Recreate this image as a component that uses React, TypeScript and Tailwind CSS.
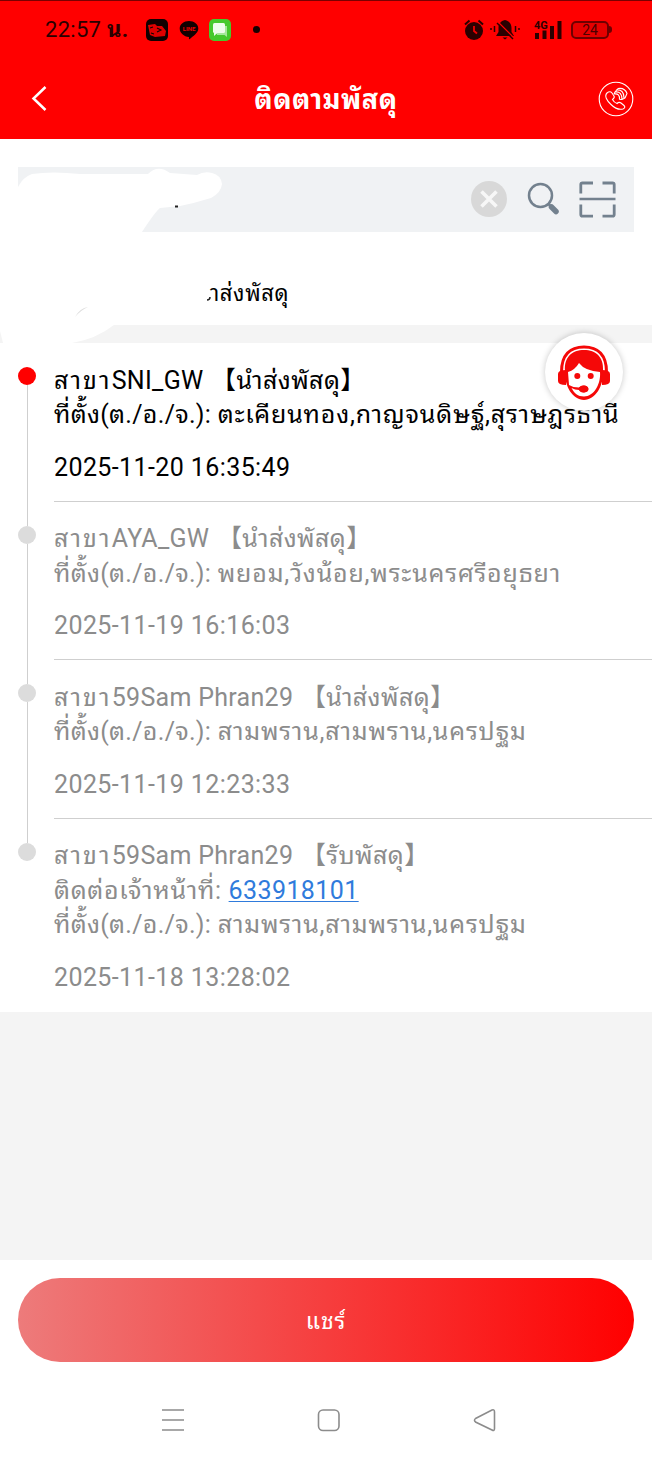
import type { ReactNode } from "react";

type TrackEvent = {
  branch: string;
  status: string;
  phone?: string;
  place: string;
  time: string;
};

const events: TrackEvent[] = [
  {
    branch: "SNI_GW",
    status: "【นำส่งพัสดุ】",
    place: "ตะเคียนทอง,กาญจนดิษฐ์,สุราษฎร์ธานี",
    time: "2025-11-20 16:35:49",
  },
  {
    branch: "AYA_GW",
    status: "【นำส่งพัสดุ】",
    place: "พยอม,วังน้อย,พระนครศรีอยุธยา",
    time: "2025-11-19 16:16:03",
  },
  {
    branch: "59Sam Phran29",
    status: "【นำส่งพัสดุ】",
    place: "สามพราน,สามพราน,นครปฐม",
    time: "2025-11-19 12:23:33",
  },
  {
    branch: "59Sam Phran29",
    status: "【รับพัสดุ】",
    phone: "633918101",
    place: "สามพราน,สามพราน,นครปฐม",
    time: "2025-11-18 13:28:02",
  },
];

function StatusBar() {
  return (
    <div className="flex h-[58px] items-center border-t border-[#7a0000] pr-[40px] pl-[45px] text-[#2b0000]">
      <span className="w-[101px] text-[22px] leading-none tracking-[0.3px] whitespace-nowrap">
        22:57 <span className="font-bold">น.</span>
      </span>

      {/* Notifications */}
      <svg width="22" height="22" viewBox="0 0 22 22">
        <rect width="22" height="22" rx="5" fill="#120000" />
        <path d="M2 6 L9 5 L11 7 L16 7 L20 12 L19 17 L9 18 L4 16 Z" fill="#e00000" />
        <path d="M4 9 L7 8 M5 14 L8 15 M11 9 L15 11 L11 13" fill="none" stroke="#120000" strokeWidth="1.1" />
      </svg>
      <svg className="ml-[11px]" width="20" height="20" viewBox="0 0 20 20">
        <path d="M10 1 C15.2 1 19.3 4.3 19.3 8.5 C19.3 13 13.8 16.2 10.8 19 C10 19.7 9.8 18.9 10 17 C4.9 16.7 .7 13 .7 8.5 C.7 4.3 4.8 1 10 1Z" fill="#120000" />
        <text x="10" y="11" textAnchor="middle" fontSize="6" fontWeight="700" fill="#f00000">LINE</text>
      </svg>
      <svg className="ml-[10px]" width="22" height="22" viewBox="0 0 22 22">
        <rect width="22" height="22" rx="5" fill="#45c92d" />
        <path d="M8 7 H18 V18 L15.500 16 H8 Z" fill="#a5e89b" />
        <rect x="4" y="4" width="12" height="10" rx="1.500" fill="#eefcec" />
        <path d="M5 13 V17 L9 13.500Z" fill="#eefcec" />
      </svg>
      <span className="ml-[22px] size-[7px] rounded-full bg-[#150000]" />

      {/* System icons */}
      <svg className="ml-auto" width="20" height="22" viewBox="0 0 20 22">
        <circle cx="10" cy="12" r="9" fill="#2b0000" />
        <path d="M1 5.500 L5.500 1.500 M19 5.500 L14.500 1.500" stroke="#2b0000" strokeWidth="2" />
        <path d="M10 7 V12 L13 14.500" fill="none" stroke="#f00000" strokeWidth="1.800" />
      </svg>
      <svg className="ml-[6px]" width="30" height="22" viewBox="0 0 30 22">
        <path d="M15 1 C19.500 2 21.500 5 21.500 9 V13 L24 17 H6 L8.500 13 V9 C8.500 5 10.500 2 15 1Z M12.500 18.500 H17.500 L15 20.500Z" fill="#2b0000" />
        <path d="M8 3 L24 19" stroke="#ff0000" strokeWidth="1.500" />
        <path d="M7 4 L23 20" stroke="#2b0000" strokeWidth="1.500" />
        <path d="M1 9 V11 M4.500 7 V13 M25.500 7 V13 M29 9 V11" stroke="#2b0000" strokeWidth="1.500" />
      </svg>
      <svg className="ml-[13px]" width="30" height="22" viewBox="0 0 30 22">
        <path d="M4 14 V20 M11.500 11.500 V20 M19 7 V20 M26.500 2 V20" stroke="#2b0000" strokeWidth="4" />
        <text x="1" y="9.500" fontSize="11" fontWeight="700" fill="#2b0000">4G</text>
      </svg>
      <span className="ml-[8px] flex items-center">
        <span className="flex h-[18px] w-[38px] items-center justify-center rounded-[5px] border-2 border-[#6e0000] bg-[#e60000] text-[14px] leading-none text-[#4b0000]">
          24
        </span>
        <span className="h-[7px] w-[3px] rounded-r-sm bg-[#6e0000]" />
      </span>
    </div>
  );
}

function Header() {
  return (
    <div className="grid h-[81px] grid-cols-[1fr_auto_1fr] items-center pr-[18px] pl-[31px] text-white">
      <svg width="36" height="28" viewBox="0 0 36 28" fill="none" stroke="currentColor" strokeWidth="2.500">
        <path d="M14.500 2 L2.500 13.500 L14.500 25" />
      </svg>
      <h1 className="-ml-[13px] pt-[4px] text-[27px] font-bold tracking-[0.6px] whitespace-nowrap">ติดตามพัสดุ</h1>
      <svg className="ml-auto" width="36" height="36" viewBox="0 0 36 36" fill="none" stroke="currentColor" strokeWidth="1.100">
        <circle cx="18" cy="18" r="16.800" />
        <path d="M9 12 Q12 9.500 14 12 L16 15 Q17 16.500 14.500 18.500 Q16 21.500 19 22.500 Q21 20.500 23 22 L26 24.500 Q28 26.500 25 28 Q19 29.500 13 23.500 C9 20 6 15 9 12Z" />
        <path d="M16 13 Q22 12 21.500 18.500 M17 11 Q24 10 24 18.500 M18 9 Q26 8 26 17 M20 7.500 Q27 6.500 29 12.500 L27 17 M16 13 L17 11 L20 7.500 M21.500 18.500 L24 18.500 L27 17" />
      </svg>
    </div>
  );
}

function SearchBox() {
  return (
    <div className="mx-[18px] mt-[28px] flex h-[65px] items-center justify-end bg-[#f0f2f4] pr-[18px] pb-px">
      <svg width="36" height="36" viewBox="0 0 36 36">
        <circle cx="18" cy="18" r="18" fill="#d8d8d8" />
        <path d="M10.500 10.500 L25.500 25.500 M25.500 10.500 L10.500 25.500" stroke="#f7f7f7" strokeWidth="3.500" />
      </svg>
      <svg className="ml-[20px]" width="33" height="34" viewBox="0 0 33 34" fill="none" stroke="#73818e">
        <circle cx="13.500" cy="13.500" r="11.500" strokeWidth="2.500" />
        <path d="M21.500 22 L24 24.500" strokeWidth="2.500" />
        <path d="M24.500 25 L29 29.500" strokeWidth="5.500" strokeLinecap="round" />
      </svg>
      <svg className="ml-[19px]" width="37" height="37" viewBox="0 0 37 37" fill="none" stroke="#73818e" strokeWidth="2.800">
        <path d="M1.800 12.500 V3.500 Q1.800 2 3.500 2 H14 M23.500 2 H33.500 Q35.200 2 35.200 3.500 V12.500 M35.200 23.500 V33.500 Q35.200 35.200 33.500 35.200 H23.500 M14 35.200 H3.500 Q1.800 35.200 1.800 33.500 V23.500" />
        <path d="M.5 18 H36.500" strokeWidth="2.500" />
      </svg>
    </div>
  );
}

/* Brush strokes hiding the parcel number and the courier line */
function Redaction() {
  return (
    <svg className="absolute top-[139px] left-0" width="326" height="210" viewBox="0 139 326 210">
      <path
        d="M0 196 L18 187 Q23 177 32 174 Q52 171 80 174 H148 Q158 164 170 173 L197 175 Q204 171 212 173 Q221 175 222 184 Q221 193 211 198 Q195 203 180 206 L160 208 Q155 212 142 232 V300 L114 325 Q96 339 72 343 L3 343 L0 331 Z"
        fill="#fff"
      />
      <rect x="175" y="205.500" width="3" height="2" fill="#222" />
      <path d="M75 317 Q80 308 88 307 Q81 310 75 317Z" fill="#dedede" />
      <path d="M207 300 Q210 300 210 297" fill="none" stroke="#222" strokeWidth="1.500" />
    </svg>
  );
}

function SupportButton() {
  return (
    <button className="absolute top-[333px] left-[545px] flex size-[78px] items-center justify-center rounded-full bg-white shadow-[0_0_6px_rgba(0,0,0,0.22)]">
      <svg width="54" height="56" viewBox="0 0 54 56">
        <path d="M4.500 28 C4.500 11 13 3 27 3 C41 3 49.500 11 49.500 28" fill="none" stroke="#f50808" strokeWidth="3" />
        <path d="M8 27 C7 13 15 6 27 6 C39 6 47 13 46 27 C47 42 38 56 27 56 C16 56 7 42 8 27Z" fill="#f50808" />
        <path d="M11 28 Q18 26 22 19 Q28 27 43 28 C44 40 37 52.500 27 52.500 C21 52.500 17 49 14.500 44 Q18 46 22 46 Q24 48.500 27 48.500 Q31.500 48 31.500 45 Q31 41.500 27 41.500 Q24 41.500 22 43.500 Q16 43.500 12 41Z" fill="#fff" />
        <ellipse cx="26.500" cy="45" rx="4.800" ry="3.400" fill="#f50808" />
        <circle cx="20.300" cy="32" r="3" fill="#f50808" />
        <circle cx="33.700" cy="32" r="3" fill="#f50808" />
        <path d="M9 26 Q1 26 1 30 V37 Q1 41 9 41Z M45 26 Q53 26 53 30 V37 Q53 41 45 41Z" fill="#f50808" />
      </svg>
    </button>
  );
}

function Line({ children }: { children: ReactNode }) {
  return <p className="h-[34.500px] leading-[34.500px] whitespace-nowrap">{children}</p>;
}

function TimelineItem({ event, first, last }: { event: TrackEvent; first: boolean; last: boolean }) {
  return (
    <li className={first ? "flex text-black" : "flex text-[#8c8c8c]"}>
      <div className="flex w-[54px] shrink-0 flex-col items-center">
        <span className={first ? "h-[24px]" : "h-[24px] w-px bg-[#cfcfcf]"} />
        <span
          className={first ? "size-[18px] rounded-full bg-[#ff0000]" : "size-[18px] rounded-full bg-[#dcdcdc]"}
        />
        {!last && <span className="w-px flex-1 bg-[#cfcfcf]" />}
      </div>

      <div
        className={
          last
            ? "h-[193px] flex-1 pt-[20.500px] text-[25px] tracking-[0.4px]"
            : "h-[158.500px] flex-1 border-b border-[#cfcfcf] pt-[20.500px] text-[25px] tracking-[0.4px]"
        }
      >
        <Line>
          <span className="tracking-[2.1px]">สาขา</span>
          <span className="tracking-[0.3px]">{event.branch}</span>
          <span className="ml-px tracking-[0.4px]"> {event.status}</span>
        </Line>
        {event.phone && (
          <Line>
            <span className="tracking-[0.7px]">ติดต่อเจ้าหน้าที่: </span>
            <a className="text-[#2f7bdc] underline decoration-1 underline-offset-2">{event.phone}</a>
          </Line>
        )}
        <Line>
          <span className="tracking-[0.3px]">ที่ตั้ง(ต./อ./จ.): </span>
          <span className="tracking-[0.8px]">{event.place}</span>
        </Line>
        <div className="pt-[18px]">
          <Line>{event.time}</Line>
        </div>
      </div>
    </li>
  );
}

function NavBar() {
  return (
    <div className="flex h-[98px] items-center pt-[18px] pl-[161px]">
      <svg width="336" height="28" viewBox="0 0 336 28" fill="none" stroke="#8c8c8c" strokeWidth="1.600">
        <path d="M1 4 H23 M1 14 H23 M1 24 H23" />
        <rect x="157.500" y="4" width="20.500" height="20.500" rx="4.500" />
        <path d="M314.500 12.500 L331 4 Q333.500 3 333.500 6 V22.500 Q333.500 25.500 331 24 L314.500 16 Q312.500 14.200 314.500 12.500Z" />
      </svg>
    </div>
  );
}

export default function App() {
  return (
    <div className="relative flex h-[1460px] w-[652px] flex-col overflow-hidden bg-[#f4f4f4] font-[Roboto,'Noto_Sans_Thai_Looped',Waree,Loma,Garuda,'Noto_Sans_CJK_SC',sans-serif]">
      <header className="h-[139px] bg-[#ff0000]">
        <StatusBar />
        <Header />
      </header>

      <section className="h-[186px] bg-white">
        <SearchBox />
        <p className="mt-[45px] pl-[210px] text-[22px] leading-[34px] tracking-[0.6px] whitespace-nowrap">
          าส่งพัสดุ
        </p>
      </section>

      <ul className="mt-[18px] bg-white">
        {events.map((event, i) => (
          <TimelineItem key={event.time} event={event} first={i === 0} last={i === events.length - 1} />
        ))}
      </ul>

      <footer className="mt-auto bg-white">
        <div className="px-[18px] pt-[18px]">
          <button className="flex h-[84px] w-full items-center justify-center rounded-full bg-linear-to-r/srgb from-[#ed7b7b] to-[#ff0000] pt-[4px] text-[23px] tracking-[0.8px] text-white">
            แชร์
          </button>
        </div>
        <NavBar />
      </footer>

      <Redaction />
      <SupportButton />
    </div>
  );
}
